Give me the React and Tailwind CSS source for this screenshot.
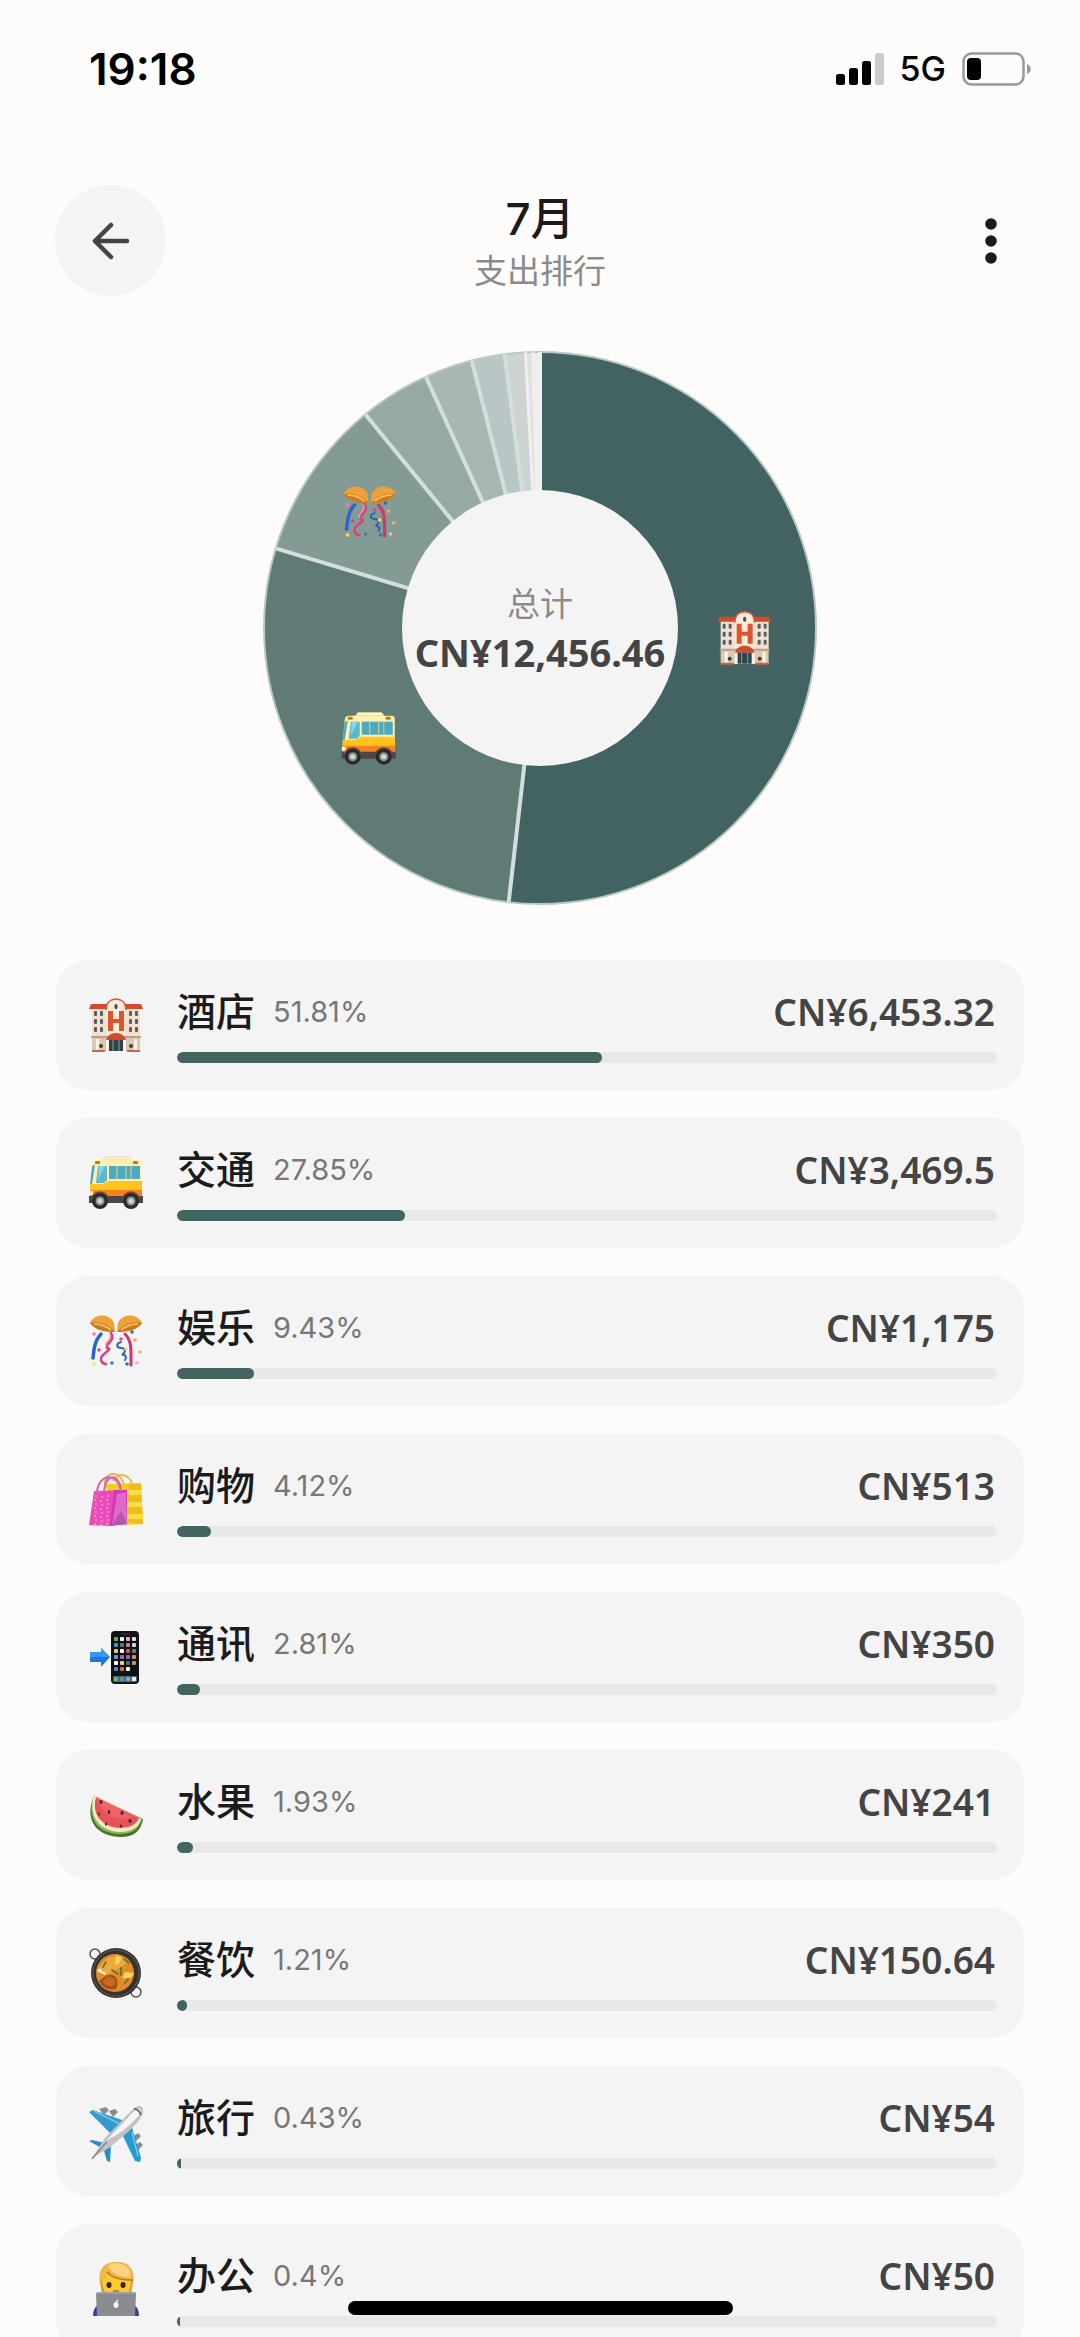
import React from "react";

const categories = [
    { name: "酒店", percent: 51.81, amount: "CN¥6,453.32", icon: "hotel", color: "#426361" },
    { name: "交通", percent: 27.85, amount: "CN¥3,469.5", icon: "bus", color: "#607a75" },
    { name: "娱乐", percent: 9.43, amount: "CN¥1,175", icon: "party", color: "#839a95" },
    { name: "购物", percent: 4.12, amount: "CN¥513", icon: "bags", color: "#96a9a5" },
    { name: "通讯", percent: 2.81, amount: "CN¥350", icon: "phone", color: "#a9b7b4" },
    { name: "水果", percent: 1.93, amount: "CN¥241", icon: "melon", color: "#bac6c5" },
    { name: "餐饮", percent: 1.21, amount: "CN¥150.64", icon: "pan", color: "#cdd3d2" },
    { name: "旅行", percent: 0.43, amount: "CN¥54", icon: "plane", color: "#dfe2e1" },
    { name: "办公", percent: 0.4, amount: "CN¥50", icon: "office", color: "#efebe9" },
];

const Hotel = () => (
    <>
        <path d="M3 38h48v15H3z" fill="#dcc6b4" />
        <path d="M3 8h48v31H3z" fill="#f4decd" />
        <path d="M2 6h17v5H0zM35 6h17l2 5H35z" fill="#cf4b2c" />
        <path d="M17 53V12C18 4 22 1 27 1s9 3 10 11v41z" fill="#fbead9" />
        <path d="M17 12C17 4 22 1 27 1s10 3 10 11" fill="none" stroke="#d4583a" strokeWidth="1.6" />
        <rect x="25.5" y="6" width="3" height="5" rx="1.5" fill="#44505e" />
        <path d="M19 13h5v8h6v-8h5v20h-5v-8h-6v8h-5z" fill="#dc5531" />
        {[13, 21, 29].map((y) => (
            <g key={y} fill="#55606b">
                <rect x="5" y={y} width="3" height="5" rx="1" />
                <rect x="11" y={y} width="3" height="5" rx="1" />
                <rect x="40" y={y} width="3" height="5" rx="1" />
                <rect x="46" y={y} width="3" height="5" rx="1" />
            </g>
        ))}
        <path d="M2 38h50v2H2z" fill="#b99f8c" />
        <path d="M7 41h3v11H7zM17 41h2v12h-2zM35 41h2v12h-2zM45 41h3v11h-3z" fill="#fff3e6" />
        <path d="M17 42c2-5 5-7 10-7s8 2 10 7z" fill="#cf4b2c" />
        <path d="M20 42h14v11H20z" fill="#2f434d" />
        <path d="M24 42v11M30 42v11" stroke="#8ba0a6" />
        <circle cx="12" cy="48" r="2" fill="#2f4f28" />
        <circle cx="42" cy="48" r="2" fill="#2f4f28" />
        <path d="M3 52h13v2H3zM38 52h13v2H38z" fill="#c8664c" />
    </>
);

const Bus = () => (
    <>
        <path d="M14 4l2-3h24l2 3z" fill="#fff8cd" stroke="#e4d9a8" />
        <path d="M3 8c0-3 2-4 4-4h43c2 0 3 1 3 4v38H1V30z" fill="#fff0ae" />
        <path d="M1 28h13l5-3h34v15H1z" fill="#ffc41d" />
        <path d="M1 34h52v7H1z" fill="#f58220" />
        <path d="M0 40h54v7H0z" fill="#49474a" />
        <path d="M3 10l3-1-3 19H1z" fill="#4aa9bf" />
        <path d="M9 10h9v14l-3 3H7z" fill="#5bb9ce" />
        <path d="M20 10h31v13H20z" fill="#4ba9c1" />
        <path d="M28 10v13M37 10v13M42 10v13" stroke="#d5c87e" strokeWidth="1.2" />
        <path d="M10 10l6 0-7 14z" fill="#8bd4df" />
        <rect x="6" y="5" width="5" height="3" rx="1" fill="#c27b19" />
        <rect x="44" y="5" width="5" height="3" rx="1" fill="#c27b19" />
        <path d="M2 43c1-10 17-10 18 0zM33 43c1-10 17-10 18 0z" fill="#7a4c35" />
        <path d="M0 35h4v4H0z" fill="#fff1bd" />
        {[11, 42].map((cx) => (
            <g key={cx}>
                <circle cx={cx} cy="45" r="8" fill="#292a2e" />
                <circle cx={cx} cy="45" r="4.5" fill="#8d9198" />
                <circle cx={cx} cy="45" r="2.5" fill="#d5d7da" />
            </g>
        ))}
    </>
);

const Party = () => (
    <>
        <path d="M1 9C5-1 21-1 25 9l1 9C16 18 6 16 1 9z" fill="#eea13b" />
        <path d="M1 9c8-2 17 0 25 9C15 18 6 16 1 9z" fill="#c87c1e" />
        <path d="M5 10c6 0 12 2 17 6" fill="none" stroke="#f5bc56" strokeWidth="2" />
        <path d="M53 9C49-1 33-1 29 9l-1 9c10 0 20-2 25-9z" fill="#eea13b" />
        <path d="M53 9c-8-2-17 0-25 9 11 0 20-2 25-9z" fill="#c87c1e" />
        <path d="M49 10c-6 0-12 2-17 6" fill="none" stroke="#f5bc56" strokeWidth="2" />
        <g fill="none" strokeLinecap="round">
            <path d="M12 20C6 26 5 34 4 44" stroke="#2863d5" strokeWidth="3.5" />
            <path d="M22 19c5 8-6 10-4 15 8 1-8 6-6 12 1 3 3 4 5 4" stroke="#df3e75" strokeWidth="2.5" />
            <path d="M21 20c2 7-6 8-4 12" stroke="#f393b8" strokeWidth="1.5" />
            <path d="M32 28c-6 2-4 6 0 6s6 3 1 7c4-1 5 3 3 5" stroke="#2863b5" strokeWidth="2" />
            <path d="M36 20c7 7 6 16 6 31" stroke="#d63368" strokeWidth="3" />
        </g>
        {[
            [5, 20, "#f180a4"], [10, 36, "#d94580"], [5, 50, "#f8df62"], [23, 49, "#4777b4"],
            [32, 25, "#df4779"], [37, 35, "#ffe04f"], [46, 26, "#f2a94c"], [51, 38, "#e9ad80"],
            [38, 50, "#416eb5"], [48, 49, "#efb4cc"], [43, 18, "#4a65a8"],
        ].map(([cx, cy, fill]) => (
            <circle key={cx + "-" + cy} cx={cx} cy={cy} r="1.8" fill={fill} />
        ))}
    </>
);

const Bags = () => (
    <>
        <path d="M16 13V9c3-9 14-11 19 3M24 9C29-2 42 4 43 12" fill="none" stroke="#e7b84c" strokeWidth="2" />
        <path d="M15 12l37-1 2 41-18 1z" fill="#f8cd1e" />
        <path d="M40 12h12l2 40-17-2z" fill="#efbd1b" />
        <path d="M38 18h15v5H38zM38 30h15v5H38zM38 42h16v5H38z" fill="#fbdc45" />
        <path d="M5 19l33-1v34l-17 2-21-1z" fill="#eb4bb9" />
        <path d="M25 18h13v34l-17 2z" fill="#ce3ab2" />
        <path d="M28 22l9-2 1 32-15 1z" fill="#e067cb" />
        {[24, 32, 40, 48].map((y) => (
            <path key={y} d={`M6 ${y}h2m4 1h2m4-1h2m-15 4h2m4 1h2m4-1h2`} stroke="#ff9bd7" strokeWidth="1.5" />
        ))}
        <path d="M23 53l9-14 6 13z" fill="#ae5bae" />
        <path d="M8 20C10 1 29 0 32 19M15 20C17-1 30 3 32 17" fill="none" stroke="#d16ca9" strokeWidth="2.2" />
    </>
);

const appColors = [
    "#4eb762", "#ffffff", "#e8a8b5", "#e0e0e0",
    "#4694c7", "#68717c", "#ad8997", "#d5d5df",
    "#e9cf68", "#fafafa", "#dc4e51", "#70777f",
    "#4ba7d8", "#bd56ae", "#6a78cb", "#e98c37",
    "#ffffff", "#edd27b", "#636363", "#9b9b9b",
    "#4290ce", "#d9654e", "#ffffff", "#111216",
];

const Phone = () => (
    <>
        <rect x="22" y="1" width="28" height="53" rx="4" fill="#111216" />
        <path d="M32 4h9" stroke="#30343a" strokeWidth="1.5" />
        {appColors.map((fill, i) => (
            <rect key={i} x={25 + (i % 4) * 6} y={7 + Math.floor(i / 4) * 6} width="4" height="4" rx="1" fill={fill} />
        ))}
        <rect x="24" y="46" width="24" height="6" rx="1" fill="#57646a" />
        <rect x="25" y="47" width="4" height="4" rx="1" fill="#5aba70" />
        <rect x="31" y="47" width="4" height="4" rx="1" fill="#3e9fa4" />
        <rect x="37" y="47" width="4" height="4" rx="1" fill="#65b7de" />
        <rect x="43" y="47" width="4" height="4" rx="1" fill="#f6f6f6" />
        <path d="M1 22h11v-4l9 9-9 10v-5H1z" fill="#1b78e0" />
        <path d="M1 22h11v-4l9 9H1z" fill="#3597ef" />
    </>
);

const Melon = () => (
    <>
        <path d="M5 8C-6 33 9 49 32 49c14 0 20-7 22-18z" fill="#44762d" />
        <path d="M5 7C-3 29 8 46 31 46c12 0 19-5 22-15z" fill="#92b260" />
        <path d="M5 7C-1 28 10 43 31 44c12 0 19-5 21-13z" fill="#f4edc3" />
        <path d="M7 9C2 28 14 39 31 40c10 0 17-4 19-10z" fill="#e95259" />
        <path d="M7 9l36 20C28 35 12 25 7 9z" fill="#f27072" opacity="0.6" />
        <g fill="#4d242b">
            <ellipse cx="12" cy="14" rx="1.5" ry="2" />
            <ellipse cx="20" cy="24" rx="1.3" ry="2" />
            <ellipse cx="33" cy="25" rx="1.5" ry="2" />
            <ellipse cx="41" cy="33" rx="1.5" ry="2" />
            <ellipse cx="10" cy="26" rx="1" ry="1.5" />
            <ellipse cx="17" cy="36" rx="1.2" ry="1.5" />
            <ellipse cx="32" cy="38" rx="1.2" ry="1.5" />
        </g>
    </>
);

const Pan = () => (
    <>
        <circle cx="6" cy="8" r="5" fill="none" stroke="#54504c" strokeWidth="1.5" />
        <circle cx="47" cy="46" r="5" fill="none" stroke="#54504c" strokeWidth="1.5" />
        <circle cx="27" cy="27" r="25" fill="#353332" />
        <circle cx="27" cy="27" r="23" fill="none" stroke="#625b51" />
        <circle cx="26" cy="27" r="19" fill="#df8d2a" />
        <path d="M10 22c6-12 17-15 28-8-2 8-15 9-20 16z" fill="#edaa43" />
        <path d="M18 29c9-2 13 6 9 14-9 2-14-2-17-8z" fill="#a94e17" />
        <path d="M18 31c7-2 11 5 6 9-6 1-9-2-10-5z" fill="#c76920" />
        <path d="M27 9l5 2c0 5-2 7-6 8zM36 26l9 1c-1 5-6 6-12 5z" fill="#ffd45c" />
        <path d="M8 25c1-4 5-2 5 1 3-1 4 1 3 3z" fill="#fff0d2" />
        <path d="M35 13l5 4M32 22v7M17 16l-3 5M36 37l3-4M23 24l6 4" stroke="#74732d" strokeWidth="2" strokeLinecap="round" />
    </>
);

const Plane = () => (
    <>
        <path d="M10 5l7-2 3 3-5 5zM20 7l6-2 3 3-5 5zM43 33l6-4 3 3-6 6zM45 42l6-4 3 3-6 6z" fill="#8d898d" />
        <path d="M0 8l4-2 32 11-13 14z" fill="#349bcf" />
        <path d="M42 20l-9 10 13 27 5 1 1-4z" fill="#239bd4" />
        <path d="M0 37l3-1 17 4-6 5zM22 40l-7 7 3 10 3 1z" fill="#248fc4" />
        <path d="M5 7l26 13M43 28l6 24" stroke="#78c4df" strokeWidth="1.5" />
        <path d="M3 54l13-20L43 6c5-5 12-6 11 2-1 7-8 13-15 20L20 44z" fill="#c4c0c5" />
        <path d="M17 37L44 8c4-4 8-4 8-1 0 4-10 13-20 21z" fill="#f7f5f5" />
        <path d="M45 5c4 0 6 3 7 6" fill="none" stroke="#75686d" strokeWidth="2" />
        <path d="M3 55l12-14 3-3" fill="none" stroke="#8c8588" strokeWidth="1.5" />
    </>
);

const Office = () => (
    <>
        <path d="M4 54c0-9 5-13 12-14h22c8 1 12 6 12 14z" fill="#353da4" />
        <path d="M11 20C9 6 17 0 28 0c11 0 18 7 16 20l-2 12H13z" fill="#d99a2b" />
        <path d="M13 18c0-5 5-8 14-8s15 3 15 9c0 11-5 17-14 17S13 29 13 18z" fill="#fcc92f" />
        <path d="M11 19C9 6 17 0 28 0c11 0 18 7 15 18-11 1-20-1-25-7 0 4-3 7-7 8z" fill="#f0b84c" />
        <path d="M19 4c4-4 15-4 21 3 1 3 2 5 1 8-9 0-18-3-22-11z" fill="#fbd37f" />
        <path d="M18 10c5 6 14 8 25 8" fill="none" stroke="#bf7c22" strokeWidth="1.5" />
        <ellipse cx="20" cy="23" rx="2.5" ry="3" fill="#3a2416" />
        <ellipse cx="34" cy="23" rx="2.5" ry="3" fill="#3a2416" />
        <path d="M24 29h6" stroke="#b96f20" strokeWidth="1.5" />
        <path d="M7 32c0-1 1-2 2-2h36c2 0 2 1 2 2l-1 22H8z" fill="#898b90" />
        <path d="M8 31h38" stroke="#b3b4b7" />
        <ellipse cx="27" cy="43" rx="2.5" ry="3" fill="#f4f4f4" />
        <path d="M27 40l2-2" stroke="#f4f4f4" strokeWidth="1.5" />
    </>
);

const icons = {
    hotel: Hotel,
    bus: Bus,
    party: Party,
    bags: Bags,
    phone: Phone,
    melon: Melon,
    pan: Pan,
    plane: Plane,
    office: Office,
};

const CategoryIcon = ({ name, ...props }) => {
    const Drawing = icons[name];
    return (
        <svg viewBox="0 0 54 54" overflow="visible" aria-hidden="true" {...props}>
            <Drawing />
        </svg>
    );
};

const StatusBar = () => (
    <div className="flex shrink-0 items-center justify-between pt-[45px] pr-12 pl-[89px] text-black">
        <span className="font-['Inter',sans-serif] text-[44px] leading-[48px] font-semibold">19:18</span>
        <div className="flex items-center gap-4">
            <svg className="h-8 w-12" viewBox="0 0 48 32" aria-hidden="true">
                <rect x="0" y="21" width="9" height="11" rx="2.5" />
                <rect x="13" y="15" width="9" height="17" rx="2.5" />
                <rect x="26" y="8" width="9" height="24" rx="2.5" />
                <rect x="39" y="0" width="9" height="32" rx="2.5" fill="#cbcbca" />
            </svg>
            <span className="font-['Inter',sans-serif] text-[34px] leading-[40px] font-medium">5G</span>
            <svg className="h-[34px] w-[70px]" viewBox="0 0 70 34" aria-hidden="true">
                <rect x="1.5" y="1.5" width="60" height="31" rx="8" fill="none" stroke="#999" strokeWidth="2.5" />
                <rect x="5" y="6" width="14" height="22" rx="4" />
                <path d="M65 12c5 2 5 8 0 10z" fill="#999" />
            </svg>
        </div>
    </div>
);

const Header = () => (
    <header className="mt-[92px] flex shrink-0 items-center justify-between px-[55px]">
        <button aria-label="返回" className="flex size-[111px] items-center justify-center rounded-full bg-[#f4f4f4]">
            <svg className="size-10" viewBox="0 0 40 40" fill="none" stroke="#444" strokeWidth="4.5" strokeLinecap="round" strokeLinejoin="round" aria-hidden="true">
                <path d="M36 20H4M20 4L4 20l16 16" />
            </svg>
        </button>
        <div className="pt-[5px] text-center">
            <h1 className="text-[44px] leading-[56px] font-medium text-[#1b1b1b]">7月</h1>
            <p className="text-[33px] leading-[48px] text-[#8b8b8b]">支出排行</p>
        </div>
        <button aria-label="更多" className="flex size-[111px] items-center justify-end pr-7">
            <svg className="h-[46px] w-3" viewBox="0 0 12 46" fill="#1b1b1b" aria-hidden="true">
                <circle cx="6" cy="6" r="5.8" />
                <circle cx="6" cy="23" r="5.8" />
                <circle cx="6" cy="40" r="5.8" />
            </svg>
        </button>
    </header>
);

const CENTER = 278;
const OUTER = 276;
const INNER = 138;

// share runs from 0 to 100, clockwise from the top
const pointAt = (share, radius) => {
    const angle = (share / 100) * Math.PI * 2;
    return [CENTER + radius * Math.sin(angle), CENTER - radius * Math.cos(angle)];
};

const slicePath = (start, end) => {
    const large = end - start > 50 ? 1 : 0;
    const [x1, y1] = pointAt(start, OUTER);
    const [x2, y2] = pointAt(end, OUTER);
    return `M${CENTER} ${CENTER}L${x1} ${y1}A${OUTER} ${OUTER} 0 ${large} 1 ${x2} ${y2}Z`;
};

const slices = categories.map((item, i) => {
    const start = categories.slice(0, i).reduce((sum, c) => sum + c.percent, 0);
    return { ...item, start, end: start + item.percent };
});

const DonutChart = () => (
    <div className="mx-auto mt-[54px] grid size-[556px] shrink-0 place-items-center">
        <svg className="col-start-1 row-start-1 size-full" viewBox="0 0 556 556" aria-hidden="true">
            {slices.map((s) => (
                <path key={s.name} d={slicePath(s.start, s.end)} fill={s.color} />
            ))}
            <circle cx={CENTER} cy={CENTER} r={OUTER} fill="none" stroke="#b9c9c5" strokeWidth="2" />
            {slices.map((s) => {
                const [x, y] = pointAt(s.start, OUTER);
                return (
                    <path
                        key={s.name}
                        d={`M${CENTER} ${CENTER}L${x} ${y}`}
                        stroke={s.start > 98 || s.start === 0 ? "#eeefee" : "#d3dfdc"}
                        strokeWidth={s.start > 98 ? 3 : 4}
                    />
                );
            })}
            <circle cx={CENTER} cy={CENTER} r={INNER} fill="#f4f4f4" />
            {slices.filter((s) => s.percent > 5).map((s) => {
                const [x, y] = pointAt((s.start + s.end) / 2, 205);
                return <CategoryIcon key={s.name} name={s.icon} x={x - 27} y={y - 29} width="54" height="54" />;
            })}
        </svg>
        <div className="z-10 col-start-1 row-start-1 text-center">
            <p className="text-[33px] leading-[48px] text-[#8b8b8b]">总计</p>
            <p className="font-['Noto_Sans',sans-serif] text-[38px] leading-[48px] font-bold text-[#444]">CN¥12,456.46</p>
        </div>
    </div>
);

const CategoryRow = ({ item }) => (
    <li className="flex h-[130px] shrink-0 items-center gap-[34px] rounded-[32px] bg-[#f4f4f4] pr-[27px] pl-[33px]">
        <CategoryIcon name={item.icon} className="size-[54px] shrink-0" />
        <div className="flex-1 pb-[3px]">
            <div className="flex items-center justify-between">
                <div className="flex items-center gap-[18px]">
                    <span className="text-[39px] leading-[56px] font-medium text-[#1b1b1b]">{item.name}</span>
                    <span className="font-['Inter',sans-serif] text-[29px] leading-[56px] text-[#777]">{item.percent}%</span>
                </div>
                <span className="pr-[2px] font-['Noto_Sans',sans-serif] text-[37px] leading-[56px] font-semibold text-[#444]">{item.amount}</span>
            </div>
            <div className="mt-3 h-[11px] overflow-hidden rounded-full bg-[#e8e8e8]">
                <div className="h-full rounded-full bg-[#43645f]" style={{ width: `${item.percent}%` }} />
            </div>
        </div>
    </li>
);

const App = () => {
    return (
        <div className="relative flex h-screen flex-col overflow-hidden bg-[#fdfcfb] font-['Inter','Noto_Sans_CJK_SC',sans-serif]">
            <StatusBar />
            <Header />
            <main className="flex min-h-0 flex-1 flex-col overflow-y-auto [scrollbar-width:none]">
                <DonutChart />
                <ul className="mt-[54px] flex flex-col gap-7 px-14 pb-14">
                    {categories.map((item) => (
                        <CategoryRow key={item.name} item={item} />
                    ))}
                </ul>
            </main>
            {/* Home indicator */}
            <div className="absolute inset-x-0 bottom-[22px] mx-auto h-[14px] w-[385px] rounded-full bg-black" />
        </div>
    );
};

export default App;
